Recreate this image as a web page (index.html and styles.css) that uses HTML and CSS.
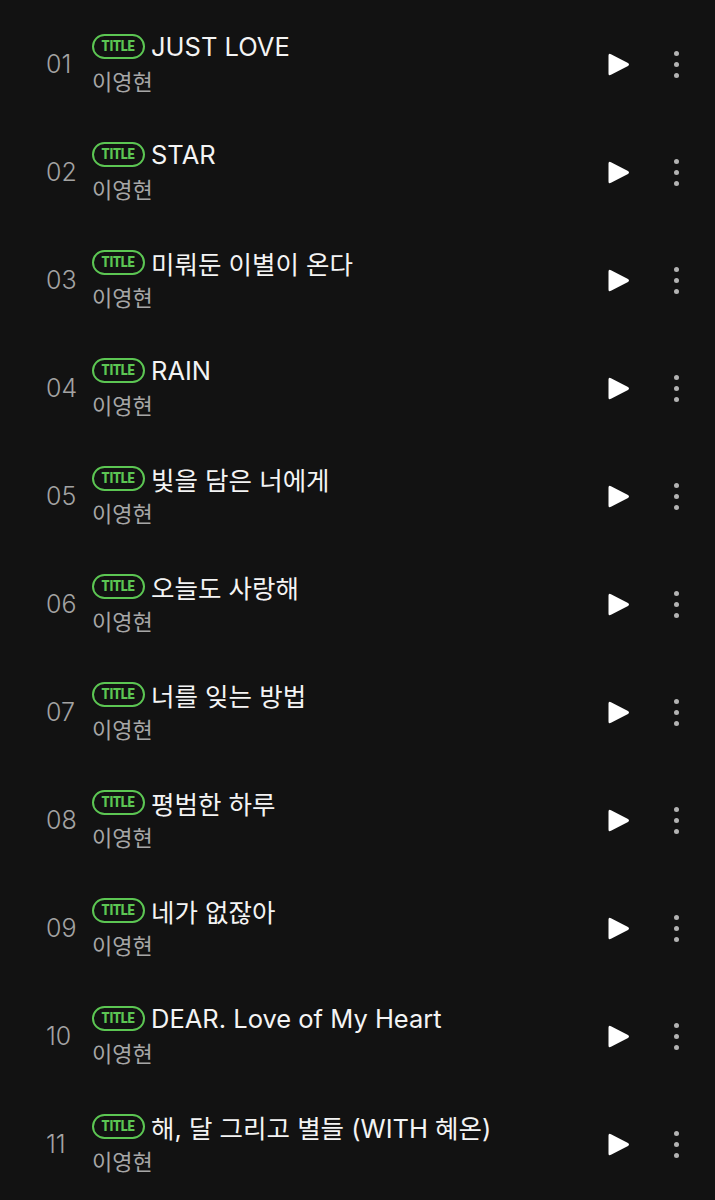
FILE: index.html
```html
<!DOCTYPE html>
<html lang="ko">
<head>
<meta charset="utf-8">
<link rel="stylesheet" href="styles.css">
</head>
<body>
<ul class="list">
  <li class="row"><span class="num">01</span><div class="info"><div class="title"><span class="badge"><span>TITLE</span></span><span class="name">JUST LOVE</span></div><div class="artist">이영현</div></div><button class="play"><svg viewBox="0 0 22 25"><path d="M3 2.2 Q0.5 0.8 0.5 3.6 V21.4 Q0.5 24.2 3 22.8 L20 14 Q22 12.5 20 11 Z"/></svg></button><button class="more"><i></i><i></i><i></i></button></li>
  <li class="row"><span class="num">02</span><div class="info"><div class="title"><span class="badge"><span>TITLE</span></span><span class="name">STAR</span></div><div class="artist">이영현</div></div><button class="play"><svg viewBox="0 0 22 25"><path d="M3 2.2 Q0.5 0.8 0.5 3.6 V21.4 Q0.5 24.2 3 22.8 L20 14 Q22 12.5 20 11 Z"/></svg></button><button class="more"><i></i><i></i><i></i></button></li>
  <li class="row"><span class="num">03</span><div class="info"><div class="title"><span class="badge"><span>TITLE</span></span><span class="name">미뤄둔 이별이 온다</span></div><div class="artist">이영현</div></div><button class="play"><svg viewBox="0 0 22 25"><path d="M3 2.2 Q0.5 0.8 0.5 3.6 V21.4 Q0.5 24.2 3 22.8 L20 14 Q22 12.5 20 11 Z"/></svg></button><button class="more"><i></i><i></i><i></i></button></li>
  <li class="row"><span class="num">04</span><div class="info"><div class="title"><span class="badge"><span>TITLE</span></span><span class="name">RAIN</span></div><div class="artist">이영현</div></div><button class="play"><svg viewBox="0 0 22 25"><path d="M3 2.2 Q0.5 0.8 0.5 3.6 V21.4 Q0.5 24.2 3 22.8 L20 14 Q22 12.5 20 11 Z"/></svg></button><button class="more"><i></i><i></i><i></i></button></li>
  <li class="row"><span class="num">05</span><div class="info"><div class="title"><span class="badge"><span>TITLE</span></span><span class="name">빛을 담은 너에게</span></div><div class="artist">이영현</div></div><button class="play"><svg viewBox="0 0 22 25"><path d="M3 2.2 Q0.5 0.8 0.5 3.6 V21.4 Q0.5 24.2 3 22.8 L20 14 Q22 12.5 20 11 Z"/></svg></button><button class="more"><i></i><i></i><i></i></button></li>
  <li class="row"><span class="num">06</span><div class="info"><div class="title"><span class="badge"><span>TITLE</span></span><span class="name">오늘도 사랑해</span></div><div class="artist">이영현</div></div><button class="play"><svg viewBox="0 0 22 25"><path d="M3 2.2 Q0.5 0.8 0.5 3.6 V21.4 Q0.5 24.2 3 22.8 L20 14 Q22 12.5 20 11 Z"/></svg></button><button class="more"><i></i><i></i><i></i></button></li>
  <li class="row"><span class="num">07</span><div class="info"><div class="title"><span class="badge"><span>TITLE</span></span><span class="name">너를 잊는 방법</span></div><div class="artist">이영현</div></div><button class="play"><svg viewBox="0 0 22 25"><path d="M3 2.2 Q0.5 0.8 0.5 3.6 V21.4 Q0.5 24.2 3 22.8 L20 14 Q22 12.5 20 11 Z"/></svg></button><button class="more"><i></i><i></i><i></i></button></li>
  <li class="row"><span class="num">08</span><div class="info"><div class="title"><span class="badge"><span>TITLE</span></span><span class="name">평범한 하루</span></div><div class="artist">이영현</div></div><button class="play"><svg viewBox="0 0 22 25"><path d="M3 2.2 Q0.5 0.8 0.5 3.6 V21.4 Q0.5 24.2 3 22.8 L20 14 Q22 12.5 20 11 Z"/></svg></button><button class="more"><i></i><i></i><i></i></button></li>
  <li class="row"><span class="num">09</span><div class="info"><div class="title"><span class="badge"><span>TITLE</span></span><span class="name">네가 없잖아</span></div><div class="artist">이영현</div></div><button class="play"><svg viewBox="0 0 22 25"><path d="M3 2.2 Q0.5 0.8 0.5 3.6 V21.4 Q0.5 24.2 3 22.8 L20 14 Q22 12.5 20 11 Z"/></svg></button><button class="more"><i></i><i></i><i></i></button></li>
  <li class="row"><span class="num">10</span><div class="info"><div class="title"><span class="badge"><span>TITLE</span></span><span class="name">DEAR. Love of My Heart</span></div><div class="artist">이영현</div></div><button class="play"><svg viewBox="0 0 22 25"><path d="M3 2.2 Q0.5 0.8 0.5 3.6 V21.4 Q0.5 24.2 3 22.8 L20 14 Q22 12.5 20 11 Z"/></svg></button><button class="more"><i></i><i></i><i></i></button></li>
  <li class="row"><span class="num">11</span><div class="info"><div class="title"><span class="badge"><span>TITLE</span></span><span class="name">해, 달 그리고 별들 (WITH 혜온)</span></div><div class="artist">이영현</div></div><button class="play"><svg viewBox="0 0 22 25"><path d="M3 2.2 Q0.5 0.8 0.5 3.6 V21.4 Q0.5 24.2 3 22.8 L20 14 Q22 12.5 20 11 Z"/></svg></button><button class="more"><i></i><i></i><i></i></button></li>
</ul>
</body>
</html>
```
FILE: styles.css
```css
html, body {
  margin: 0;
  padding: 0;
  background: #121212;
}
body {
  font-family: Inter, "Noto Sans CJK KR", sans-serif;
  color: #f2f2f2;
}
.list {
  list-style: none;
  margin: 0;
  padding: 10px 0 0 0;
}
.row {
  height: 108px;
  display: flex;
  align-items: center;
  padding: 0 36px 0 46px;
}
.num {
  width: 46px;
  font-size: 25px;
  font-weight: 300;
  color: #a3a3a3;
}
.info {
  flex: 1;
  display: flex;
  flex-direction: column;
  min-width: 0;
}
.title {
  display: flex;
  align-items: center;
  height: 36px;
  gap: 6px;
}
.badge {
  box-sizing: border-box;
  width: 53px;
  height: 25px;
  border: 2px solid #5cc653;
  border-radius: 13px;
  color: #5cc653;
  font-family: Roboto, Inter, sans-serif;
  font-weight: 900;
  font-size: 15.5px;
  display: flex;
  align-items: center;
  justify-content: center;
  flex: none;
  overflow: hidden;
}
.badge span {
  display: block;
  transform: scaleX(0.82);
  letter-spacing: -0.2px;
}
.name {
  font-size: 25.5px;
  white-space: nowrap;
  color: #f4f4f4;
}
.artist {
  height: 36px;
  line-height: 36px;
  font-size: 22px;
  color: #a6a6a6;
}
button {
  background: none;
  border: none;
  padding: 0;
  margin: 0;
  cursor: pointer;
}
.play {
  width: 22px;
  height: 25px;
  margin-right: 43px;
}
.play svg {
  display: block;
  width: 22px;
  height: 25px;
  fill: #ffffff;
}
.more {
  width: 6px;
  display: flex;
  flex-direction: column;
  align-items: center;
  gap: 6px;
}
.more i {
  display: block;
  width: 5px;
  height: 5px;
  border-radius: 50%;
  background: #b3b3b3;
}
```
